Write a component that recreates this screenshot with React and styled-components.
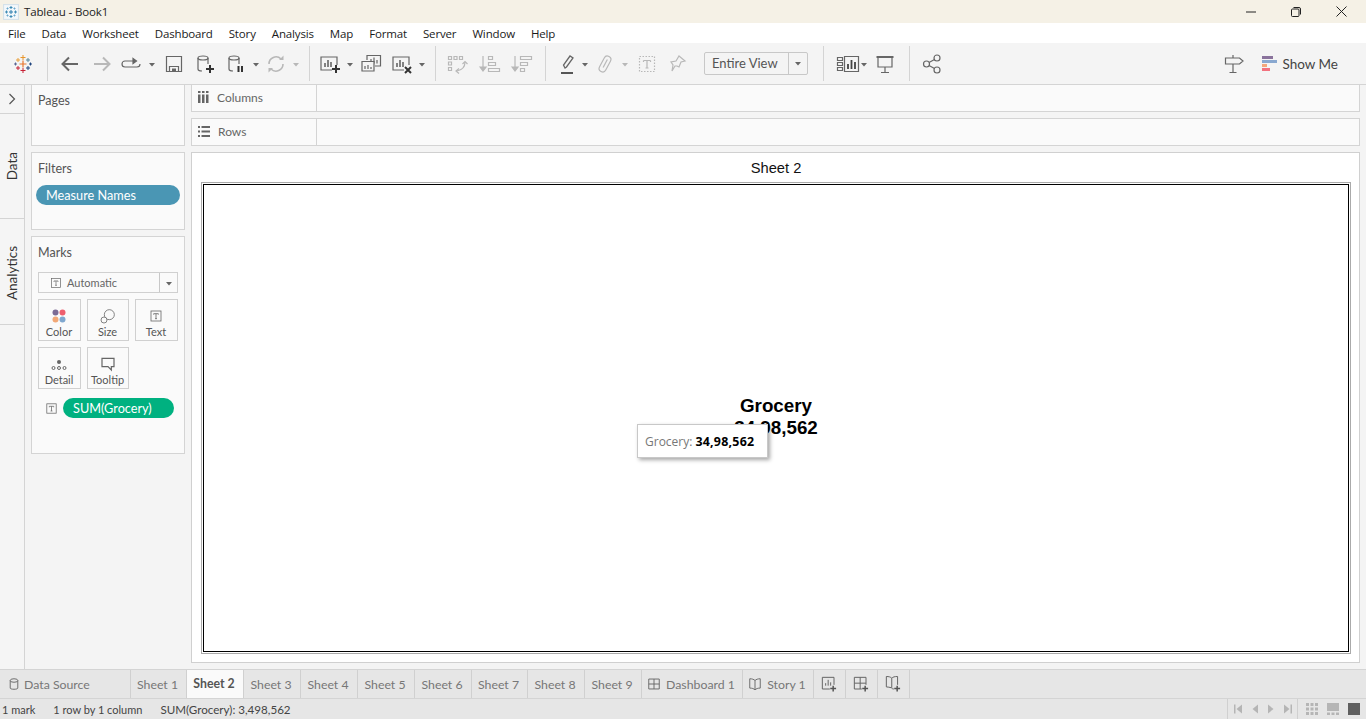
import React from "react";
import styled, { createGlobalStyle } from "styled-components";

const GlobalStyle = createGlobalStyle`
  html, body { margin: 0; padding: 0; height: 100%; overflow: hidden; }
  body { font-family: "Lato", "Open Sans", sans-serif; font-size: 12px; color: #555; background: #f4f4f4; }
  * { box-sizing: border-box; }
`;

const Page = styled.div`
  width: 1366px;
  height: 719px;
  display: flex;
  flex-direction: column;
`;

/* title bar + menu */
const TitleBar = styled.div`
  height: 23px;
  background: #f5f1e6;
  display: flex;
  align-items: center;
  padding-left: 3px;
  color: #222;
  font-family: "Open Sans", sans-serif;
  font-size: 11.5px;
  letter-spacing: -0.13px;
  gap: 5px;
`;
const WinControls = styled.div`
  margin-left: auto;
  display: flex;
  align-items: center;
  padding-right: 19px;
  gap: 35px;
`;
const MenuBar = styled.div`
  height: 20px;
  background: #fff;
  display: flex;
  align-items: center;
  gap: 16px;
  padding-left: 8px;
  color: #1a1a1a;
  font-family: "Open Sans", sans-serif;
  font-size: 11.5px;
  letter-spacing: -0.15px;
`;

/* toolbar */
const Toolbar = styled.div`
  height: 41px;
  background: #f4f4f4;
  display: flex;
  align-items: center;
  padding: 0 28px 0 11px;
`;
const Tool = styled.span`
  display: flex;
  flex: none;
  align-items: center;
  margin-left: ${(p) => p.$gap || 0}px;
`;
const Sep = styled.span`
  flex: none;
  width: 1px;
  height: 35px;
  background: #d4d4d4;
  margin-left: ${(p) => p.$gap}px;
`;
const ViewSelect = styled.div`
  flex: none;
  width: 104px;
  height: 23px;
  margin: -1px 0 0 ${(p) => p.$gap}px;
  border: 1px solid #c8c8c8;
  border-radius: 2px;
  display: grid;
  grid-template-columns: 1fr 19px;
  align-items: center;
  color: #555;
  font-size: 13px;
  padding-left: 7px;
`;
const ViewCaret = styled.span`
  height: 100%;
  border-left: 1px solid #c8c8c8;
  display: flex;
  align-items: center;
  justify-content: center;
`;
const RightTools = styled.div`
  margin-left: auto;
  display: flex;
  align-items: center;
`;
const ShowMe = styled.div`
  display: flex;
  align-items: center;
  gap: 5px;
  margin-left: 17px;
  color: #444;
  font-size: 13.5px;
`;

/* main area */
const Main = styled.div`
  height: 585px;
  display: flex;
  background: #f4f4f4;
  border-top: 1px solid #d4d4d4;
`;
const Rail = styled.div`
  width: 25px;
  flex: none;
  background: #f5f5f5;
  border-right: 1px solid #d4d4d4;
  color: #333;
`;
const RailCell = styled.div`
  height: ${(p) => p.$h}px;
  border-bottom: 1px solid #d4d4d4;
  display: flex;
  align-items: ${(p) => p.$align || "center"};
  justify-content: center;
  padding-top: ${(p) => p.$pad || 0}px;
`;
const RailLabel = styled.span`
  writing-mode: vertical-rl;
  transform: rotate(180deg);
  font-size: 13.5px;
`;
const Side = styled.div`
  width: 154px;
  margin-left: 6px;
  flex: none;
  display: flex;
  flex-direction: column;
  gap: 6px;
  margin-top: -1px;
`;
const Panel = styled.div`
  height: ${(p) => p.$h}px;
  background: #fafafa;
  border: 1px solid #d4d4d4;
  padding: 8px 6px;
  position: relative;
`;
const PanelTitle = styled.div`
  font-size: 12.5px;
  line-height: 15px;
  color: #555;
`;
const Pill = styled.div`
  display: flex;
  align-items: center;
  height: 20px;
  border-radius: 10px;
  background: ${(p) => p.$bg};
  color: #fff;
  font-size: 12.7px;
  padding-left: 10px;
`;
const FilterPill = styled(Pill)`
  width: 144px;
  margin: 9px 0 0 -2px;
`;
const MarkSelect = styled.div`
  height: 21px;
  margin-top: 12px;
  width: 140px;
  border: 1px solid #d0d0d0;
  display: grid;
  grid-template-columns: 1fr 18px;
  align-items: center;
  font-size: 11px;
  color: #666;
`;
const MarkType = styled.span`
  display: flex;
  align-items: center;
  gap: 4px;
  padding-left: 10px;
`;
const MarkGrid = styled.div`
  margin-top: 6px;
  display: grid;
  grid-template-columns: 43px 42px 43px;
  grid-auto-rows: 42px;
  column-gap: 6px;
  row-gap: 6px;
`;
const MarkCard = styled.div`
  border: 1px solid #d0d0d0;
  display: flex;
  flex-direction: column;
  align-items: center;
  justify-content: flex-end;
  gap: 1px;
  padding: 0 1px 2px 0;
  font-size: 11px;
  color: #555;
`;
const FieldRow = styled.div`
  display: flex;
  align-items: center;
  gap: 4px;
  margin: 9px 0 0 6px;
`;
const FieldPill = styled(Pill)`
  width: 111px;
`;

const Content = styled.div`
  flex: 1;
  margin: -1px 6px 0 6px;
  display: flex;
  flex-direction: column;
  gap: 6px;
`;
const Shelf = styled.div`
  height: 28px;
  background: #fafafa;
  border: 1px solid #d4d4d4;
  display: flex;
`;
const ShelfLabel = styled.div`
  width: 125px;
  border-right: 1px solid #d4d4d4;
  display: flex;
  align-items: center;
  gap: 8px;
  padding: 0 0 2px 6px;
  font-size: 12px;
  color: #666;
`;
const Viz = styled.div`
  height: 511px;
  background: #fff;
  border: 1px solid #d0d0d0;
  padding: 0 8px 8px 9px;
  display: flex;
  flex-direction: column;
`;
const SheetTitle = styled.div`
  height: 29px;
  flex: none;
  display: flex;
  align-items: center;
  justify-content: center;
  font-family: "Liberation Sans", Arial, sans-serif;
  font-size: 14.7px;
  color: #111;
`;
const FrameOuter = styled.div`
  flex: 1;
  border: 1px solid #aaa;
  padding: 1px;
`;
const FrameInner = styled.div`
  height: 100%;
  border: 1px solid #000;
  display: flex;
  flex-direction: column;
  align-items: center;
  justify-content: center;
  position: relative;
  font-family: "Liberation Sans", Arial, sans-serif;
  font-weight: 700;
  font-size: 18.8px;
  line-height: 22px;
  color: #000;
  padding-bottom: 2px;
`;
const Tooltip = styled.div`
  position: absolute;
  left: 433px;
  top: 239px;
  width: 131px;
  height: 34px;
  background: #fff;
  border: 1px solid #c8c8c8;
  box-shadow: 2px 2px 4px rgba(0, 0, 0, 0.35);
  display: flex;
  align-items: center;
  padding: 1px 0 0 7px;
  gap: 3px;
  font-family: "Open Sans", sans-serif;
  font-size: 12px;
  font-weight: 400;
  line-height: 14px;
  color: #777;
  b { color: #000; font-weight: 700; font-size: 12.4px; letter-spacing: 0.25px; }
`;

/* sheet tabs + status */
const TabBar = styled.div`
  height: 30px;
  background: #e6e6e6;
  border-top: 1px solid #d4d4d4;
  border-bottom: 1px solid #d4d4d4;
  display: flex;
`;
const Tab = styled.div`
  width: ${(p) => p.$w}px;
  flex: none;
  display: flex;
  align-items: center;
  justify-content: ${(p) => (p.$left ? "flex-start" : "center")};
  gap: ${(p) => (p.$left ? 3 : 5)}px;
  padding-left: ${(p) => (p.$left ? 7 : 0)}px;
  padding-right: ${(p) => (p.$left ? 0 : 2)}px;
  border-right: 1px solid #d0d0d0;
  background: ${(p) => (p.$active ? "#fafafa" : "transparent")};
  color: ${(p) => (p.$active ? "#555" : "#777")};
  font-weight: ${(p) => (p.$active ? 700 : 400)};
  font-size: 12.3px;
  padding-bottom: ${(p) => (p.$active ? 2 : 0)}px;
`;
const StatusBar = styled.div`
  flex: 1;
  background: #e6e6e6;
  display: flex;
  align-items: center;
  font-size: 11px;
  color: #444;
  padding-left: 2px;
`;
const StatusText = styled.span`
  margin-right: ${(p) => p.$mr || 0}px;
  font-size: ${(p) => p.$size || 11}px;
`;
const StatusRight = styled.div`
  margin-left: auto;
  height: 100%;
  display: flex;
  align-items: center;
`;
const NavGroup = styled.div`
  width: 71px;
  height: 100%;
  border-left: 1px solid #d0d0d0;
  border-right: 1px solid #d0d0d0;
  display: flex;
  align-items: center;
  justify-content: center;
  gap: 4px;
`;
const ViewGroup = styled.div`
  width: 68px;
  display: flex;
  align-items: center;
  gap: 9px;
  padding: 0 6px 0 8px;
`;

/* drawings */
const G = "#666";
const L = "#b8b8b8";

const Ic = ({ children, s = 24, vb = 24 }) => (
  <svg width={s} height={s} viewBox={`0 0 ${vb} ${vb}`} fill="none" stroke={G} strokeWidth="1.2" style={{ display: "block", flex: "none" }}>
    {children}
  </svg>
);

const Caret = ({ c = G }) => (
  <svg width="8" height="16" viewBox="0 0 8 16" style={{ display: "block" }}>
    <path d="M1 7h6l-3 3.500z" fill={c} />
  </svg>
);

const Cross = ({ x, y, c, r = 3, w = 1 }) => (
  <path d={`M${x - r} ${y}H${x + r}M${x} ${y - r}V${y + r}`} stroke={c} strokeWidth={w} />
);

const TableauMark = () => (
  <Ic>
    <Cross x={12} y={12} c="#e8762d" r={3.5} w={1.2} />
    <Cross x={12} y={5.5} c="#e8962d" r={2.5} />
    <Cross x={12} y={18.5} c="#c72035" r={2.5} />
    <Cross x={7} y={8} c="#e8a03d" r={2} />
    <Cross x={17} y={8} c="#59879b" r={2} />
    <Cross x={4.5} y={12} c="#5b6591" r={1.5} />
    <Cross x={19.5} y={12} c="#1f447e" r={1.5} />
    <Cross x={7} y={16} c="#c72035" r={2} />
    <Cross x={17} y={16} c="#1f447e" r={2} />
  </Ic>
);

const SnowLogo = () => (
  <Ic s={16} vb={16}>
    <rect x="0.500" y="0.500" width="15" height="15" fill="#f3f8fb" stroke="#d5e2ea" />
    <Cross x={8} y={8} c="#2f7fae" r={2} />
    <Cross x={8} y={3.5} c="#3d8bb5" r={1.5} />
    <Cross x={8} y={12.5} c="#3d8bb5" r={1.5} />
    <Cross x={3.5} y={8} c="#3d8bb5" r={1.5} />
    <Cross x={12.5} y={8} c="#3d8bb5" r={1.5} />
    <Cross x={4.5} y={4.5} c="#6aa8cc" r={1} />
    <Cross x={11.5} y={4.5} c="#6aa8cc" r={1} />
    <Cross x={4.5} y={11.5} c="#6aa8cc" r={1} />
    <Cross x={11.5} y={11.5} c="#6aa8cc" r={1} />
  </Ic>
);

const Arrow = ({ c, flip }) => (
  <Ic>
    <path d={flip ? "M4 12h15M13 5.500l6.500 6.500-6.500 6.500" : "M20 12H5M11 5.500L4.500 12l6.500 6.500"} stroke={c} strokeWidth="2" />
  </Ic>
);

const LoopIcon = () => (
  <Ic>
    <path d="M14 9H6a3 3 0 0 0 0 6h12a3 3 0 0 0 3-3" />
    <path d="M14 6.500l3.500 2.500L14 11.500z" fill={G} />
  </Ic>
);

const SaveIcon = () => (
  <Ic>
    <path d="M4.500 4.500h15v15h-15z" />
    <path d="M7.500 19.500v-5h9v5" />
    <path d="M10 16.500h4v3h-4z" fill={G} stroke="none" />
  </Ic>
);

const DbIcon = ({ badge }) => (
  <Ic>
    <ellipse cx="10" cy="6" rx="5" ry="2" />
    <path d="M5 6v11c0 1.300 2 2 4 2M15 6v6" />
    {badge === "plus" && <path d="M17 13v8M13 17h8" strokeWidth="2" stroke="#333" />}
    {badge === "pause" && <path d="M14.500 14v6M18 14v6" strokeWidth="2" stroke="#333" />}
  </Ic>
);

const RefreshIcon = () => (
  <Ic>
    <path d="M5 12a7 7 0 0 1 12-5M19 12a7 7 0 0 1-12 5" stroke={L} strokeWidth="1.600" />
    <path d="M15 8h4.500V3.500zM9 16H4.500v4.500z" fill={L} stroke="none" />
  </Ic>
);

const NewSheetIcon = ({ x }) => (
  <Ic>
    <path d="M14 18H3V5h16v8" />
    <path d="M7 15v-4M10 15V8M13 15v-5" strokeWidth="1.600" />
    {x ? (
      <path d="M15 15l6 6M21 15l-6 6" stroke="#333" strokeWidth="2" />
    ) : (
      <path d="M18 13v8M14 17h8" stroke="#333" strokeWidth="2" />
    )}
  </Ic>
);

const DupIcon = () => (
  <Ic>
    <path d="M8 8V3.500h13.500V14H16" />
    <path d="M12 11.500V7M15 11.500V5.500M18 11.500V8" />
    <path d="M3 9.500h12V19H3z" fill="#f4f4f4" />
    <path d="M6 17v-3M9 17v-4M12 17v-2" />
  </Ic>
);

const SwapIcon = () => (
  <Ic>
    <g stroke={L}>
      <path d="M3.500 4.500h3v3h-3zM9 4.500h3v3H9zM14.500 4.500h3v3h-3zM3.500 10h3v3h-3zM3.500 15.500h3v3h-3z" />
      <path d="M20 10c0 5-3 8-8 9" />
      <path d="M17.500 12l2.500-2.500 2.500 2.500M14 16.500L11 19l3 2.500" />
    </g>
  </Ic>
);

const SortIcon = ({ desc }) => (
  <Ic>
    <g stroke={L}>
      <path d="M5 4v14" />
      <path d="M2 15l3 4 3-4z" fill={L} />
      {desc ? (
        <path d="M10.500 4.500h11v3h-11zM10.500 10.500h7v3h-7zM10.500 16.500h4v3h-4z" />
      ) : (
        <path d="M10.500 4.500h4v3h-4zM10.500 10.500h7v3h-7zM10.500 16.500h11v3h-11z" />
      )}
    </g>
  </Ic>
);

const PenIcon = () => (
  <Ic>
    <path d="M9 16l-1.500-3L14 4l3 2-6.500 9z" strokeWidth="1.300" />
    <path d="M5 21h12" strokeWidth="2" stroke="#555" />
  </Ic>
);

const ClipIcon = () => (
  <Ic>
    <g stroke={L} transform="rotate(28 12 12)">
      <rect x="8.500" y="3.500" width="7" height="17" rx="3.500" />
      <path d="M12 7v9" />
    </g>
  </Ic>
);

const TBox = ({ c = G, dash, s = 24 }) => (
  <Ic s={s}>
    <rect x="4.500" y="4.500" width="15" height="15" stroke={c} strokeDasharray={dash ? "1.500 1.500" : undefined} />
    <path d="M8.500 8.500h7M12 8.500v7.500M10.500 16h3M8.500 8.500v1.500M15.500 8.500v1.500" stroke={c} />
  </Ic>
);

const PinIcon = () => (
  <Ic>
    <path d="M14 4l6 5-4 1-2 5-2-1-2 0-3 5 1-6-2-3 5-1z" stroke={L} />
  </Ic>
);

const ShowGrid = () => (
  <Ic>
    <path d="M1.500 5.500h5v3h-5zM1.500 10.500h5v3h-5zM1.500 15.500h5v3h-5z" />
    <path d="M8.500 4.500h14v15h-14z" />
    <path d="M12 17v-5M15.500 17V8M19 17v-7" strokeWidth="1.800" stroke="#444" />
  </Ic>
);

const PresentIcon = () => (
  <Ic>
    <path d="M3.500 5h17" strokeWidth="2" />
    <path d="M5 5v10h14V5M12 15v5M8 20.500h8" />
  </Ic>
);

const ShareIcon = () => (
  <Ic>
    <circle cx="6.500" cy="12" r="3" />
    <circle cx="17" cy="6" r="3" />
    <circle cx="17" cy="18" r="3" />
    <path d="M9 10.500l5.500-3M9 13.500l5.500 3" />
  </Ic>
);

const SignIcon = () => (
  <Ic>
    <path d="M4.500 6h14l3.500 3-3.500 3h-14z" />
    <path d="M12 3v3M12 12v8M8.500 20.500h7" />
  </Ic>
);

const ShowMeBars = () => (
  <svg width="15" height="16" viewBox="0 0 15 16" style={{ display: "block" }}>
    <rect y="0" width="11" height="3" fill="#8a739c" />
    <rect y="4" width="15" height="3" fill="#89a8d0" />
    <rect y="8" width="5" height="3" fill="#f3a77c" />
    <rect y="12" width="8" height="3" fill="#f2727f" />
  </svg>
);

const DotsIcon = () => (
  <svg width="16" height="16" viewBox="0 0 16 16" style={{ display: "block" }}>
    <circle cx="4.500" cy="4.500" r="3" fill="#7b6b95" />
    <circle cx="11.500" cy="4.500" r="3" fill="#ee5f6e" />
    <circle cx="4.500" cy="11.500" r="3" fill="#f2a877" />
    <circle cx="11.500" cy="11.500" r="3" fill="#7fa7cf" />
  </svg>
);

const SizeIcon = () => (
  <Ic s={16}>
    <circle cx="14" cy="10" r="7.500" />
    <circle cx="6" cy="18" r="4.500" fill="#fafafa" />
  </Ic>
);

const DetailIcon = () => (
  <svg width="16" height="16" viewBox="0 0 16 16" fill="none" stroke={G} style={{ display: "block" }}>
    <circle cx="8" cy="6" r="2" fill={G} stroke="none" />
    <circle cx="2.500" cy="12" r="1.500" />
    <circle cx="8" cy="12" r="1.500" />
    <circle cx="13.500" cy="12" r="1.500" />
  </svg>
);

const BubbleIcon = () => (
  <Ic s={16}>
    <path d="M3 3.500h18V16h-4v5l-5-5H3z" strokeWidth="1.800" />
  </Ic>
);

const ColumnsIcon = () => (
  <svg width="11" height="12" viewBox="0 0 11 12" style={{ display: "block" }}>
    <path d="M0 0h2.500v2H0zM4 0h2.500v2H4zM8 0h2.500v2H8zM0 3.500h2.500V12H0zM4 3.500h2.500V12H4zM8 3.500h2.500V12H8z" fill={G} />
  </svg>
);

const RowsIcon = () => (
  <svg width="12" height="11" viewBox="0 0 12 11" style={{ display: "block" }}>
    <path d="M0 0h2v2H0zM3.500 0H12v2H3.500zM0 4.500h2v2H0zM3.500 4.500H12v2H3.500zM0 9h2v2H0zM3.500 9H12v2H3.500z" fill={G} />
  </svg>
);

const TabDb = () => (
  <Ic s={14}>
    <ellipse cx="12" cy="6" rx="6.500" ry="3" strokeWidth="1.600" />
    <path d="M5.500 6v13c0 1 2 2 6.500 2s6.500-1 6.500-2V6" strokeWidth="1.600" />
  </Ic>
);

const TabDash = () => (
  <Ic s={14}>
    <path d="M3 3.500h18v17H3zM12 3.500v17M3 12h18" strokeWidth="1.600" />
  </Ic>
);

const TabStory = () => (
  <Ic s={14}>
    <path d="M12 6c-2-2-5-3-9-3v16c4 0 7 1 9 3 2-2 5-3 9-3V3c-4 0-7 1-9 3zM12 6v16" strokeWidth="1.600" />
  </Ic>
);

const AddSheet = () => (
  <Ic s={20}>
    <path d="M13 18H4V4h14v9" />
    <path d="M8 14v-3M11 14V7M14 14v-4" />
    <path d="M17 14v7M13.500 17.500h7" strokeWidth="1.800" stroke="#555" />
  </Ic>
);

const AddDash = () => (
  <Ic s={20}>
    <path d="M13 18H4V4h14v9M11 4v14M4 11h14" />
    <path d="M17 14v7M13.500 17.500h7" strokeWidth="1.800" stroke="#555" />
  </Ic>
);

const AddStory = () => (
  <Ic s={20}>
    <path d="M13 18c-2 0-2-1-3-1.500C8 16 6 15.500 4 15.500V3c3 0 5 .5 6.500 2C12 3.500 14 3 17.500 3v10M10.500 5v11.500" />
    <path d="M17 14v7M13.500 17.500h7" strokeWidth="1.800" stroke="#555" />
  </Ic>
);

const NavIcon = ({ dir, stop }) => (
  <svg width="12" height="12" viewBox="0 0 12 12" style={{ display: "block" }}>
    <g fill="#b5b5b5" transform={dir === "right" ? "matrix(-1 0 0 1 12 0)" : undefined}>
      <path d="M9 1.500v9L3.500 6z" />
      {stop && <path d="M1 1.500h1.500v9H1z" />}
    </g>
  </svg>
);

const ViewIcon = ({ kind }) => (
  <svg width="12" height="12" viewBox="0 0 12 12" style={{ display: "block" }}>
    {kind === "grid" && (
      <path
        d="M0 0h3v3H0zM4.500 0h3v3h-3zM9 0h3v3H9zM0 4.500h3v3H0zM4.500 4.500h3v3h-3zM9 4.500h3v3H9zM0 9h3v3H0zM4.500 9h3v3h-3zM9 9h3v3H9z"
        fill="#b5b5b5"
      />
    )}
    {kind === "strip" && <path d="M0 0h12v8H0zM0 9.500h3V12H0zM4.500 9.500h3V12h-3zM9 9.500h3V12H9z" fill="#b5b5b5" />}
    {kind === "full" && <path d="M0 0h12v12H0z" fill="#5f5f5f" />}
  </svg>
);

const MinIcon = () => (
  <svg width="10" height="10" viewBox="0 0 10 10" style={{ display: "block" }}>
    <path d="M0 5h10" stroke="#222" />
  </svg>
);
const RestoreIcon = () => (
  <svg width="10" height="10" viewBox="0 0 10 10" fill="none" stroke="#222" style={{ display: "block" }}>
    <rect x="0.500" y="2" width="7.500" height="7.500" rx="1" />
    <path d="M2.500 .5H8a1.500 1.500 0 0 1 1.500 1.500v5.500" />
  </svg>
);
const CloseIcon = () => (
  <svg width="11" height="11" viewBox="0 0 11 11" stroke="#222" style={{ display: "block" }}>
    <path d="M.5 .5l10 10M10.500 .5l-10 10" />
  </svg>
);

const menus = ["File", "Data", "Worksheet", "Dashboard", "Story", "Analysis", "Map", "Format", "Server", "Window", "Help"];
const sheets = ["Sheet 3", "Sheet 4", "Sheet 5", "Sheet 6", "Sheet 7", "Sheet 8", "Sheet 9"];
const sheetWidths = [57, 57, 57, 57, 56, 57, 57];

const App = () => {
  return (
    <Page>
      <GlobalStyle />
      <TitleBar>
        <SnowLogo />
        <span>Tableau - Book1</span>
        <WinControls>
          <MinIcon />
          <RestoreIcon />
          <CloseIcon />
        </WinControls>
      </TitleBar>
      <MenuBar>
        {menus.map((m) => (
          <span key={m}>{m}</span>
        ))}
      </MenuBar>

      <Toolbar>
        <Tool><TableauMark /></Tool>
        <Sep $gap={12} />
        <Tool $gap={10}><Arrow c={G} /></Tool>
        <Tool $gap={8}><Arrow c={L} flip /></Tool>
        <Tool $gap={5}><LoopIcon /></Tool>
        <Tool $gap={5}><Caret /></Tool>
        <Tool $gap={6}><SaveIcon /></Tool>
        <Tool $gap={7}><DbIcon badge="plus" /></Tool>
        <Tool $gap={7}><DbIcon badge="pause" /></Tool>
        <Tool $gap={4}><Caret /></Tool>
        <Tool $gap={4}><RefreshIcon /></Tool>
        <Tool $gap={4}><Caret c={L} /></Tool>
        <Sep $gap={9} />
        <Tool $gap={8}><NewSheetIcon /></Tool>
        <Tool $gap={4}><Caret /></Tool>
        <Tool $gap={5}><DupIcon /></Tool>
        <Tool $gap={7}><NewSheetIcon x /></Tool>
        <Tool $gap={4}><Caret /></Tool>
        <Sep $gap={9} />
        <Tool $gap={9}><SwapIcon /></Tool>
        <Tool $gap={9}><SortIcon /></Tool>
        <Tool $gap={8}><SortIcon desc /></Tool>
        <Sep $gap={11} />
        <Tool $gap={10}><PenIcon /></Tool>
        <Tool $gap={1}><Caret /></Tool>
        <Tool $gap={4}><ClipIcon /></Tool>
        <Tool $gap={4}><Caret c={L} /></Tool>
        <Tool $gap={6}><TBox c={L} dash /></Tool>
        <Tool $gap={6}><PinIcon /></Tool>
        <ViewSelect $gap={15}>
          <span>Entire View</span>
          <ViewCaret><Caret /></ViewCaret>
        </ViewSelect>
        <Sep $gap={15} />
        <Tool $gap={12}><ShowGrid /></Tool>
        <Tool><Caret /></Tool>
        <Tool $gap={5}><PresentIcon /></Tool>
        <Sep $gap={12} />
        <Tool $gap={10}><ShareIcon /></Tool>
        <RightTools>
          <SignIcon />
          <ShowMe>
            <ShowMeBars />
            <span>Show Me</span>
          </ShowMe>
        </RightTools>
      </Toolbar>

      <Main>
        <Rail>
          <RailCell $h={29}>
            <svg width="8" height="12" viewBox="0 0 8 12" fill="none" stroke="#555" strokeWidth="1.200" style={{ display: "block" }}>
              <path d="M1.500 1l5 5-5 5" />
            </svg>
          </RailCell>
          <RailCell $h={105} $align="flex-start" $pad={38}>
            <RailLabel>Data</RailLabel>
          </RailCell>
          <RailCell $h={106} $align="flex-start" $pad={27}>
            <RailLabel>Analytics</RailLabel>
          </RailCell>
        </Rail>

        <Side>
          <Panel $h={62}>
            <PanelTitle>Pages</PanelTitle>
          </Panel>
          <Panel $h={78}>
            <PanelTitle>Filters</PanelTitle>
            <FilterPill $bg="#4a96b4">Measure Names</FilterPill>
          </Panel>
          <Panel $h={218}>
            <PanelTitle>Marks</PanelTitle>
            <MarkSelect>
              <MarkType>
                <TBox s={14} />
                Automatic
              </MarkType>
              <ViewCaret><Caret /></ViewCaret>
            </MarkSelect>
            <MarkGrid>
              <MarkCard><DotsIcon />Color</MarkCard>
              <MarkCard><SizeIcon />Size</MarkCard>
              <MarkCard><TBox s={16} />Text</MarkCard>
              <MarkCard><DetailIcon />Detail</MarkCard>
              <MarkCard><BubbleIcon />Tooltip</MarkCard>
            </MarkGrid>
            <FieldRow>
              <TBox s={15} />
              <FieldPill $bg="#00b180">SUM(Grocery)</FieldPill>
            </FieldRow>
          </Panel>
        </Side>

        <Content>
          <Shelf>
            <ShelfLabel><ColumnsIcon />Columns</ShelfLabel>
          </Shelf>
          <Shelf>
            <ShelfLabel><RowsIcon />Rows</ShelfLabel>
          </Shelf>
          <Viz>
            <SheetTitle>Sheet 2</SheetTitle>
            <FrameOuter>
              <FrameInner>
                <span>Grocery</span>
                <span>34,98,562</span>
                <Tooltip>
                  Grocery: <b>34,98,562</b>
                </Tooltip>
              </FrameInner>
            </FrameOuter>
          </Viz>
        </Content>
      </Main>

      <TabBar>
        <Tab $w={131} $left><TabDb />Data Source</Tab>
        <Tab $w={56}>Sheet 1</Tab>
        <Tab $w={57} $active>Sheet 2</Tab>
        {sheets.map((s, i) => (
          <Tab key={s} $w={sheetWidths[i]}>{s}</Tab>
        ))}
        <Tab $w={101}><TabDash />Dashboard 1</Tab>
        <Tab $w={71}><TabStory />Story 1</Tab>
        <Tab $w={32}><AddSheet /></Tab>
        <Tab $w={32}><AddDash /></Tab>
        <Tab $w={32}><AddStory /></Tab>
      </TabBar>

      <StatusBar>
        <StatusText $mr={18}>1 mark</StatusText>
        <StatusText $mr={18}>1 row by 1 column</StatusText>
        <StatusText $size={11.6}>SUM(Grocery): 3,498,562</StatusText>
        <StatusRight>
          <NavGroup>
            <NavIcon stop />
            <NavIcon />
            <NavIcon dir="right" />
            <NavIcon dir="right" stop />
          </NavGroup>
          <ViewGroup>
            <ViewIcon kind="grid" />
            <ViewIcon kind="strip" />
            <ViewIcon kind="full" />
          </ViewGroup>
        </StatusRight>
      </StatusBar>
    </Page>
  );
};

export default App;
